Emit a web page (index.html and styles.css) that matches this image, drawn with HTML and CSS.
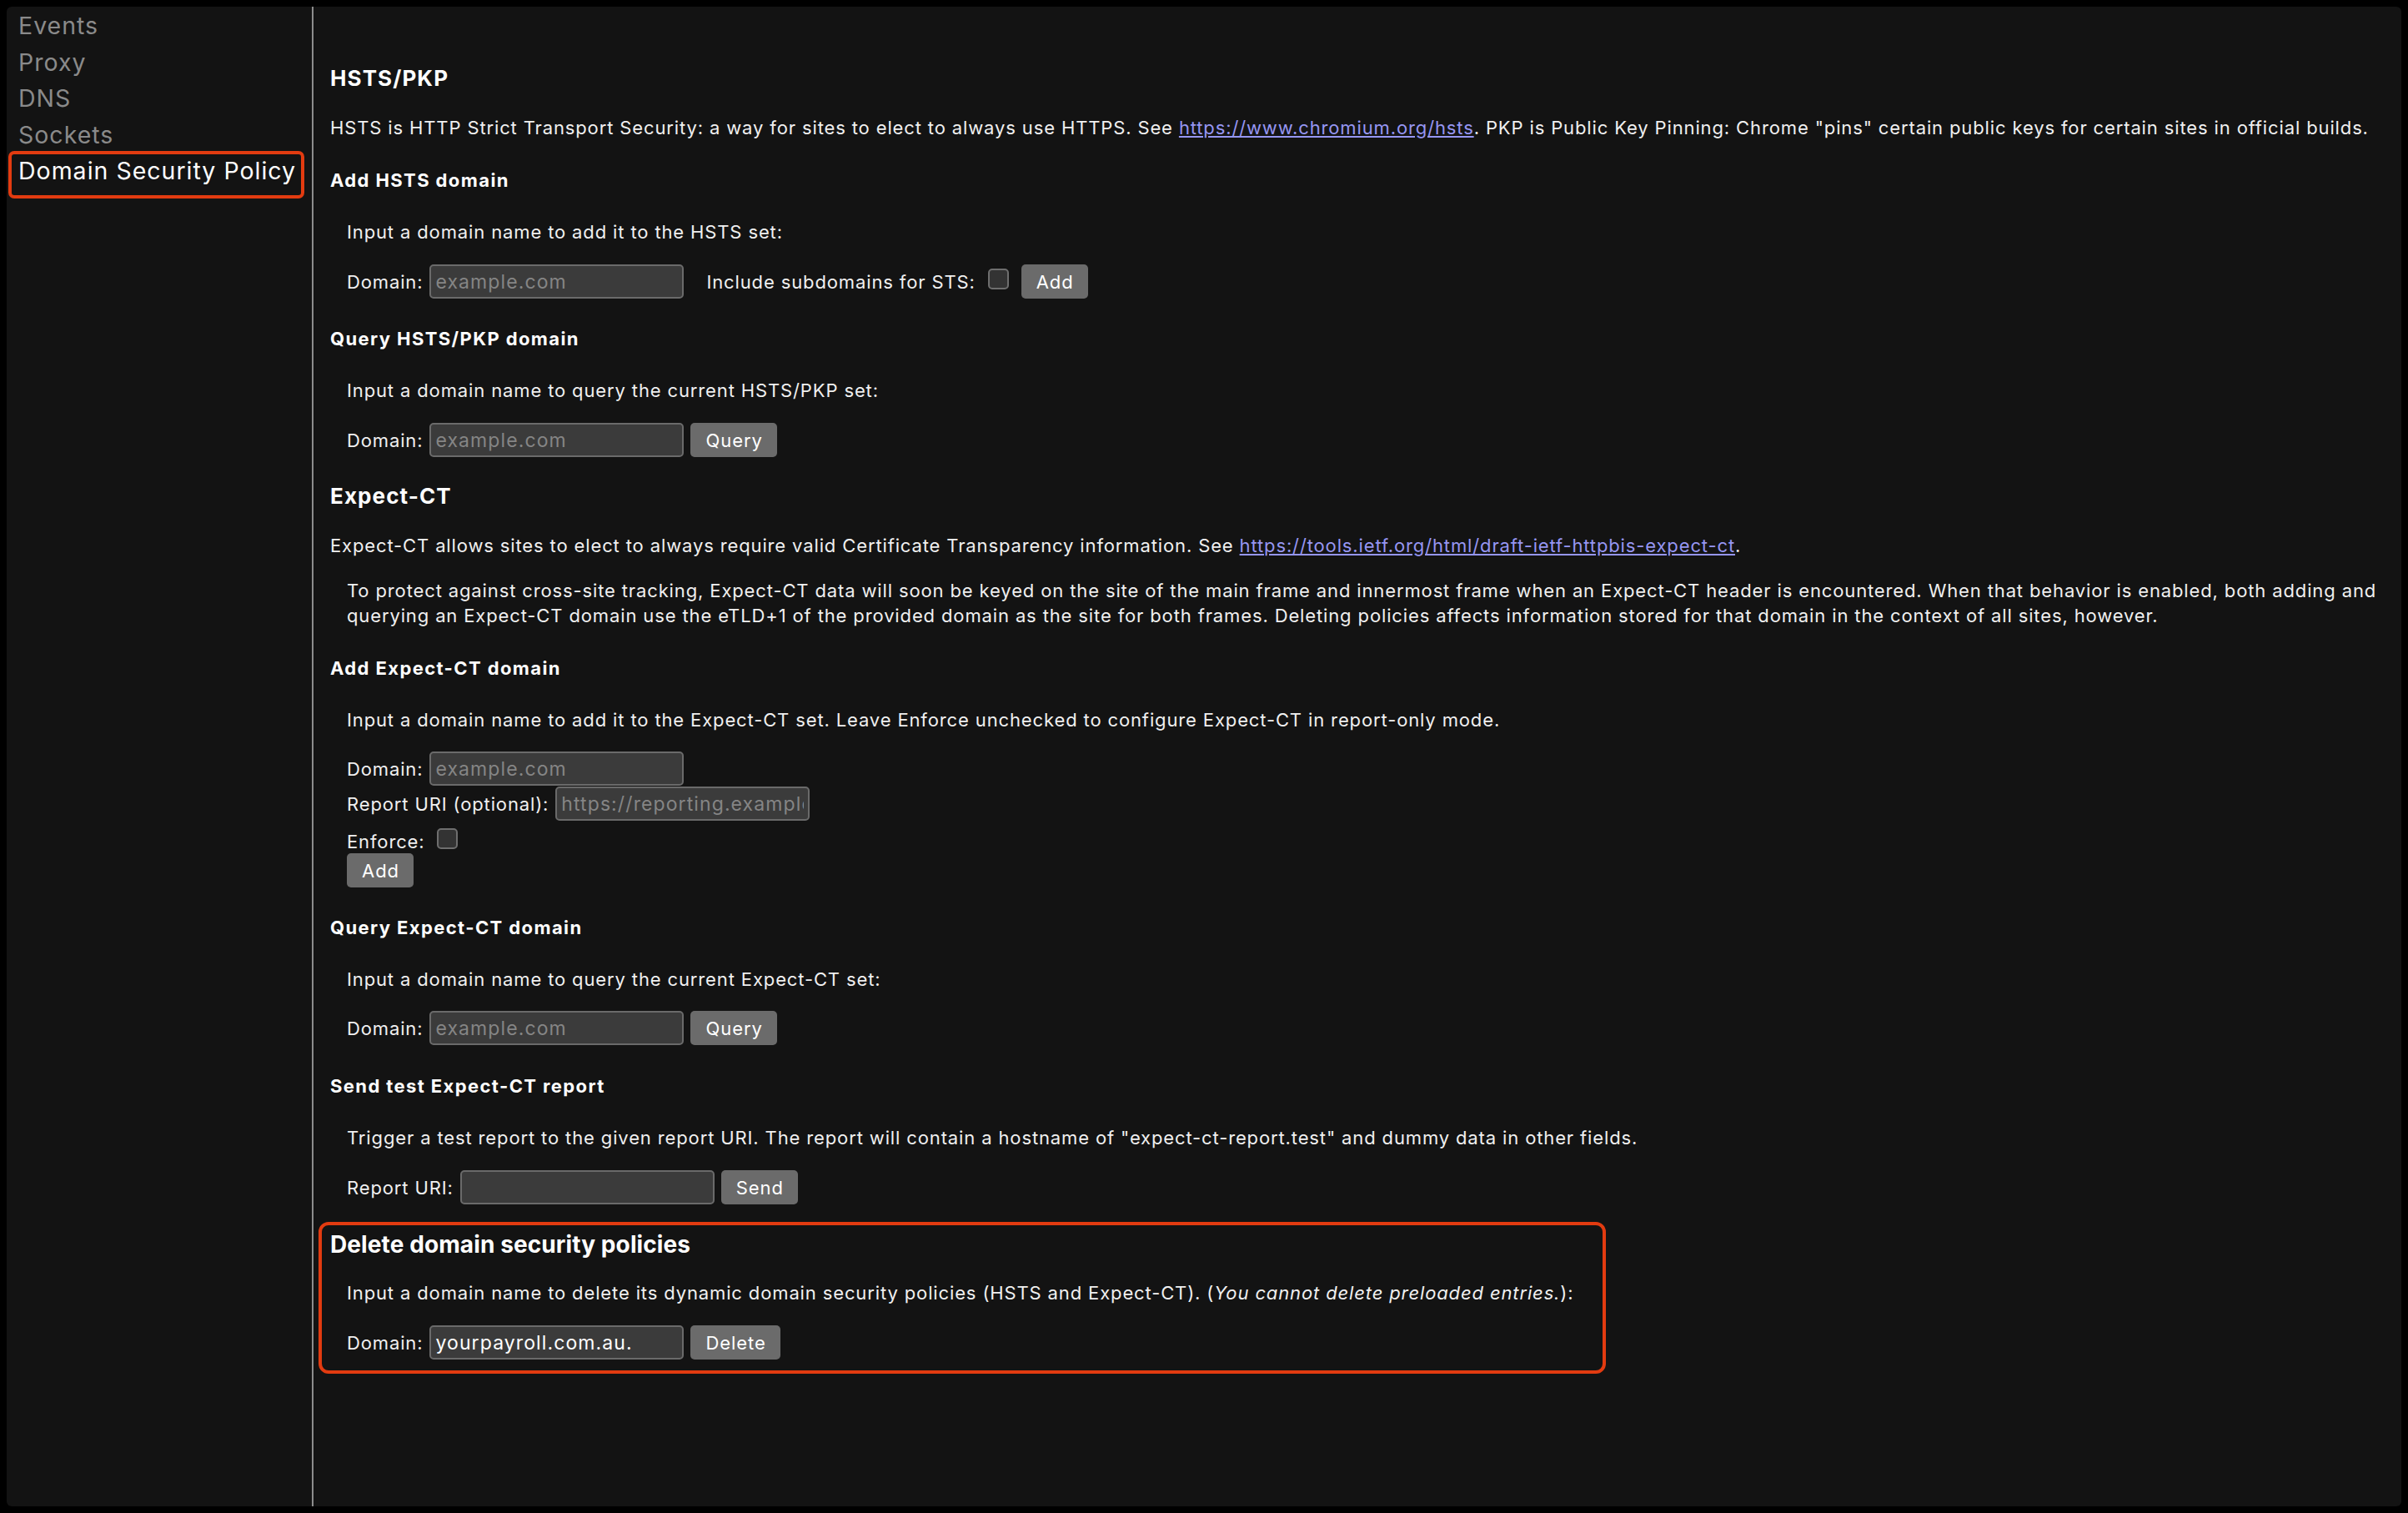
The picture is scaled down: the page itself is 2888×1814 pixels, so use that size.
FILE: index.html
```html
<!DOCTYPE html>
<html lang="en">
<head>
<meta charset="utf-8">
<title>net-internals</title>
<link rel="stylesheet" href="styles.css">
</head>
<body>
<div class="window">
  <nav class="sidebar">
    <ul class="nav">
      <li class="nav-item">Events</li>
      <li class="nav-item">Proxy</li>
      <li class="nav-item">DNS</li>
      <li class="nav-item">Sockets</li>
      <li class="nav-item selected">Domain Security Policy</li>
    </ul>
  </nav>
  <main class="content">
    <h2 class="sec-title first">HSTS/PKP</h2>
    <p class="lead">HSTS is HTTP Strict Transport Security: a way for sites to elect to always use HTTPS. See <a href="#">https://www.chromium.org/hsts</a>. PKP is Public Key Pinning: Chrome "pins" certain public keys for certain sites in official builds.</p>

    <h3 class="sub">Add HSTS domain</h3>
    <p class="desc">Input a domain name to add it to the HSTS set:</p>
    <div class="row">
      <label class="lbl">Domain:</label>
      <input class="field" type="text" placeholder="example.com">
      <label class="lbl sts">Include subdomains for STS:</label>
      <span class="check mid"></span>
      <button class="btn">Add</button>
    </div>

    <h3 class="sub">Query HSTS/PKP domain</h3>
    <p class="desc">Input a domain name to query the current HSTS/PKP set:</p>
    <div class="row">
      <label class="lbl">Domain:</label>
      <input class="field" type="text" placeholder="example.com">
      <button class="btn">Query</button>
    </div>

    <h2 class="sec-title">Expect-CT</h2>
    <p class="lead">Expect-CT allows sites to elect to always require valid Certificate Transparency information. See <a href="#">https://tools.ietf.org/html/draft-ietf-httpbis-expect-ct</a>.</p>
    <p class="note">To protect against cross-site tracking, Expect-CT data will soon be keyed on the site of the main frame and innermost frame when an Expect-CT header is encountered. When that behavior is enabled, both adding and querying an Expect-CT domain use the eTLD+1 of the provided domain as the site for both frames. Deleting policies affects information stored for that domain in the context of all sites, however.</p>

    <h3 class="sub">Add Expect-CT domain</h3>
    <p class="desc">Input a domain name to add it to the Expect-CT set. Leave Enforce unchecked to configure Expect-CT in report-only mode.</p>
    <div class="row r-first">
      <label class="lbl">Domain:</label>
      <input class="field" type="text" placeholder="example.com">
    </div>
    <div class="row r-next">
      <label class="lbl">Report URI (optional):</label>
      <input class="field" type="text" placeholder="https://reporting.example.com/report">
    </div>
    <div class="line-row">
      <span class="lbl">Enforce:</span><span class="check base"></span>
    </div>
    <div class="btn-row">
      <button class="btn">Add</button>
    </div>

    <h3 class="sub">Query Expect-CT domain</h3>
    <p class="desc">Input a domain name to query the current Expect-CT set:</p>
    <div class="row r-first">
      <label class="lbl">Domain:</label>
      <input class="field" type="text" placeholder="example.com">
      <button class="btn">Query</button>
    </div>

    <h3 class="sub sub-wide">Send test Expect-CT report</h3>
    <p class="desc">Trigger a test report to the given report URI. The report will contain a hostname of "expect-ct-report.test" and dummy data in other fields.</p>
    <div class="row">
      <label class="lbl">Report URI:</label>
      <input class="field" type="text">
      <button class="btn">Send</button>
    </div>

    <section class="highlight">
      <h2 class="big-title">Delete domain security policies</h2>
      <p class="desc tight">Input a domain name to delete its dynamic domain security policies (HSTS and Expect-CT). (<i>You cannot delete preloaded entries.</i>):</p>
      <div class="row">
        <label class="lbl">Domain:</label>
        <input class="field filled" type="text" value="yourpayroll.com.au.">
        <button class="btn">Delete</button>
      </div>
    </section>
  </main>
</div>
</body>
</html>
```

FILE: styles.css
```css
html, body {
  margin: 0;
  padding: 0;
  background: #000;
}

body {
  padding: 8px;
  font-family: Inter, "Liberation Sans", sans-serif;
  color: #f0f0f0;
}

.window {
  display: flex;
  height: 1798px;
  background: #131313;
  border-radius: 6px;
  overflow: hidden;
}

/* Sidebar */
.sidebar {
  width: 366px;
  flex: none;
  border-right: 2px solid #8c8c8c;
}

.nav {
  list-style: none;
  margin: 0;
  padding: 1px 0 0 0;
}

.nav-item {
  font-size: 28.5px;
  letter-spacing: 1px;
  line-height: 43.5px;
  padding-left: 14px;
  color: #8a8a8a;
  white-space: nowrap;
}

.nav-item.selected {
  color: #fff;
  margin: -2px 0 0 2px;
  width: 355px;
  box-sizing: border-box;
  border: 4px solid #e23b10;
  border-radius: 7px;
  padding: 3px 0 12px 8px;
  line-height: 34px;
}

/* Content */
.content {
  flex: 1;
  padding: 70px 8px 0 20px;
  font-size: 22px;
  line-height: 30px;
  letter-spacing: 0.87px;
}

.sec-title {
  margin: 31px 0 0 0;
  font-size: 26px;
  line-height: 32px;
  font-weight: 700;
  letter-spacing: 1.1px;
  color: #fff;
}

.sec-title.first {
  margin-top: 0;
}

.big-title {
  margin: 0;
  font-size: 28px;
  line-height: 34px;
  font-weight: 700;
  letter-spacing: 0.1px;
  color: #fff;
}

.sub {
  margin: 33px 0 0 0;
  font-size: 22px;
  line-height: 30px;
  font-weight: 700;
  letter-spacing: 1.4px;
  color: #fff;
}

.sub.sub-wide {
  margin-top: 34px;
}

.lead {
  margin: 28px 0 0 0;
}

.note {
  margin: 24px 0 0 0;
  padding-left: 20px;
}

.desc {
  margin: 32px 0 0 0;
  padding-left: 20px;
}

.desc.tight {
  margin-top: 26px;
}

a {
  color: #9696f2;
  text-decoration: underline;
}

.row {
  display: flex;
  align-items: center;
  height: 41px;
  margin-top: 24px;
  padding-left: 20px;
  gap: 8px;
}

.row.r-first {
  margin-top: 23px;
}

.row.r-next {
  margin-top: 1px;
}

.lbl {
  white-space: nowrap;
}

.lbl.sts {
  margin-left: 19px;
  margin-right: 7px;
}

.field {
  width: 305px;
  height: 41px;
  box-sizing: border-box;
  background: #3b3b3b;
  border: 2px solid #6a6a6a;
  border-radius: 5px;
  padding: 0 5px;
  font-family: Inter, "Liberation Sans", sans-serif;
  font-size: 23px;
  letter-spacing: 1.1px;
  color: #fff;
  outline: none;
}

.field::placeholder {
  color: #858585;
}

.btn {
  height: 41px;
  box-sizing: border-box;
  border: none;
  border-radius: 5px;
  background: #6b6b6b;
  color: #fff;
  font-family: Inter, "Liberation Sans", sans-serif;
  font-size: 22px;
  letter-spacing: 0.95px;
  padding: 0 17px 0 18px;
}

.check {
  display: inline-block;
  width: 25px;
  height: 25px;
  box-sizing: border-box;
  border: 2px solid #6e6e6e;
  border-radius: 5px;
  background: #333;
}

.check.mid {
  margin: 0 7px 7px 0;
}

.line-row {
  margin-top: 9px;
  padding-left: 20px;
  height: 30px;
}

.check.base {
  vertical-align: baseline;
  margin: 0 0 -1px 14px;
}

.btn-row {
  padding-left: 20px;
  height: 41px;
}

.highlight {
  margin: 21px 0 0 -14px;
  width: 1544px;
  box-sizing: border-box;
  border: 4px solid #e23b10;
  border-radius: 12px;
  padding: 6px 0 13px 10px;
}

.highlight .row {
  margin-top: 24px;
}
```
